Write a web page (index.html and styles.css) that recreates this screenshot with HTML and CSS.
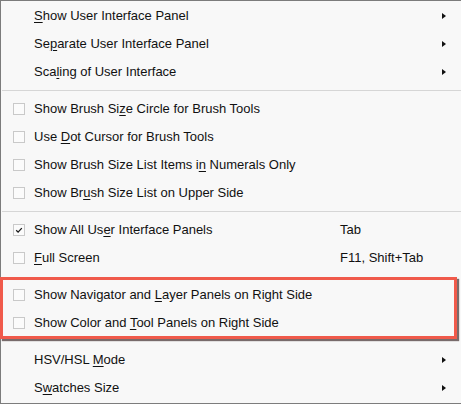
FILE: index.html
```html
<!DOCTYPE html>
<html>
<head>
<meta charset="utf-8">
<link rel="stylesheet" href="styles.css">
</head>
<body>
<div class="menu">
  <div class="item"><span class="chk none"></span><span class="label"><u>S</u>how User Interface Panel</span><span class="key"></span><span class="arrow"></span></div>
  <div class="item"><span class="chk none"></span><span class="label">Se<u>p</u>arate User Interface Panel</span><span class="key"></span><span class="arrow"></span></div>
  <div class="item"><span class="chk none"></span><span class="label">Sca<u>l</u>ing of User Interface</span><span class="key"></span><span class="arrow"></span></div>
  <div class="sep"></div>
  <div class="item"><span class="chk"></span><span class="label">Show Brush Si<u>z</u>e Circle for Brush Tools</span><span class="key"></span><span class="noarrow"></span></div>
  <div class="item"><span class="chk"></span><span class="label">Use <u>D</u>ot Cursor for Brush Tools</span><span class="key"></span><span class="noarrow"></span></div>
  <div class="item"><span class="chk"></span><span class="label">Show Brush Size List Items i<u>n</u> Numerals Only</span><span class="key"></span><span class="noarrow"></span></div>
  <div class="item"><span class="chk"></span><span class="label">Show Br<u>u</u>sh Size List on Upper Side</span><span class="key"></span><span class="noarrow"></span></div>
  <div class="sep"></div>
  <div class="item"><span class="chk checked"><svg width="12" height="12" viewBox="0 0 12 12"><path d="M3.2 6.2 L5.1 8.1 L8.8 4.1" fill="none" stroke="#1a1a1a" stroke-width="1.3"/></svg></span><span class="label">Show All Us<u>e</u>r Interface Panels</span><span class="key">Tab</span><span class="noarrow"></span></div>
  <div class="item"><span class="chk"></span><span class="label"><u>F</u>ull Screen</span><span class="key">F11, Shift+Tab</span><span class="noarrow"></span></div>
  <div class="group">
    <div class="item"><span class="chk"></span><span class="label">Show Navigator and <u>L</u>ayer Panels on Right Side</span><span class="key"></span><span class="noarrow"></span></div>
    <div class="item"><span class="chk"></span><span class="label">Show Color and <u>T</u>ool Panels on Right Side</span><span class="key"></span><span class="noarrow"></span></div>
    <div class="highlight"></div>
  </div>
  <div class="item"><span class="chk none"></span><span class="label">HSV/HSL <u>M</u>ode</span><span class="key"></span><span class="arrow"></span></div>
  <div class="item"><span class="chk none"></span><span class="label">S<u>w</u>atches Size</span><span class="key"></span><span class="arrow"></span></div>
</div>
</body>
</html>
```

FILE: styles.css
```css
html, body {
  margin: 0;
  padding: 0;
  background: #f8f8f8;
}

body {
  width: 461px;
  height: 404px;
  overflow: hidden;
}

.menu {
  box-sizing: border-box;
  width: 461px;
  height: 404px;
  border-top: 1px solid #7c7c7c;
  border-left: 1px solid #7c7c7c;
  border-bottom: 1px solid #7c7c7c;
  padding: 1px 0;
  background: #f8f8f8;
  font-family: "Liberation Sans", Arial, sans-serif;
  font-size: 13px;
  color: #111;
}

.item {
  display: grid;
  grid-template-columns: 12px 9px 306px 1fr 4px;
  align-items: center;
  height: 28px;
  padding: 0 15px 0 12px;
}

.chk {
  grid-column: 1;
  box-sizing: border-box;
  width: 12px;
  height: 12px;
  border: 1px solid #c9c9c9;
  background: #fbfbfb;
  display: flex;
  align-items: center;
  justify-content: center;
}

.chk svg {
  display: block;
  margin: -1px;
}

.chk.none {
  border: none;
  background: none;
}

.label {
  grid-column: 3;
  white-space: nowrap;
  line-height: 28px;
}

.key {
  grid-column: 4;
  white-space: nowrap;
  line-height: 28px;
}

.label u {
  text-decoration-thickness: 1px;
  text-underline-offset: 2px;
}

.arrow {
  grid-column: 5;
  width: 0;
  height: 0;
  border-left: 4px solid #111;
  border-top: 3px solid transparent;
  border-bottom: 3px solid transparent;
}

.noarrow {
  grid-column: 5;
}

.sep {
  height: 9px;
  position: relative;
}

.sep::after {
  content: "";
  display: block;
  position: absolute;
  left: 1px;
  right: 0;
  top: 4px;
  height: 1px;
  background: #d6d6d6;
}

.group {
  position: relative;
  padding: 9px 0;
}

.highlight {
  position: absolute;
  left: -1px;
  top: 5px;
  width: 457px;
  height: 62px;
  box-sizing: border-box;
  border: 3px solid #f05a4b;
  box-shadow: 2px 2px 1px rgba(50, 30, 30, 0.65);
  pointer-events: none;
}
```
